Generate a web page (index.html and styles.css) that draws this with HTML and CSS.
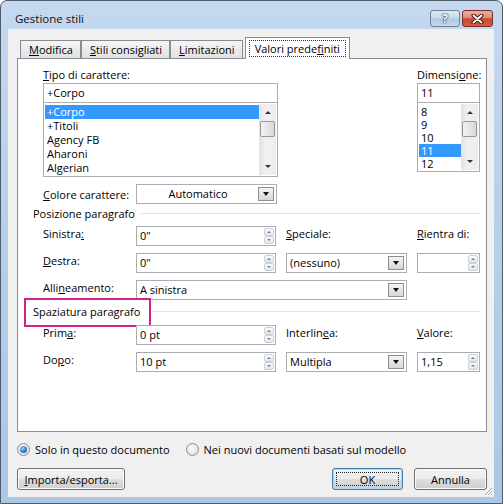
FILE: index.html
```html
<!DOCTYPE html>
<html lang="it">

<head>
    <meta charset="UTF-8">
    <meta name="viewport" content="width=device-width, initial-scale=1.0">
    <title>Gestione stili</title>
    <link rel="stylesheet" href="styles.css">
</head>

<body>
    <div class="window">
        <div class="titlebar">
            <span class="title">Gestione stili</span>
            <div class="caption">
                <div class="cap-btn help">?</div>
                <div class="cap-btn close">
                    <svg width="13" height="10" viewBox="0 0 13 10">
                        <path d="M2.5 1.5 L10.5 8.5 M10.5 1.5 L2.5 8.5" stroke="#4b1209" stroke-width="4" stroke-linecap="round" />
                        <path d="M2.5 1.5 L10.5 8.5 M10.5 1.5 L2.5 8.5" stroke="#fff" stroke-width="2" stroke-linecap="round" />
                    </svg>
                </div>
            </div>
        </div>

        <div class="client">
            <div class="tabs">
                <div class="tab"><u>M</u>odifica</div>
                <div class="tab"><u>S</u>tili consigliati</div>
                <div class="tab"><u>L</u>imitazioni</div>
                <div class="tab active"><span class="focus">Valori prede<u>f</u>initi</span></div>
            </div>

            <div class="panel">
                <div class="font-row">
                    <div class="font-col">
                        <div class="lbl"><u>T</u>ipo di carattere:</div>
                        <div class="textbox">+Corpo</div>
                        <div class="listbox">
                            <ul class="items">
                                <li class="sel">+Corpo</li>
                                <li>+Titoli</li>
                                <li>Agency FB</li>
                                <li>Aharoni</li>
                                <li>Algerian</li>
                            </ul>
                            <div class="vscroll">
                                <div class="arrow up"></div>
                                <div class="thumb"></div>
                                <div class="arrow down"></div>
                            </div>
                        </div>
                    </div>
                    <div class="size-col">
                        <div class="lbl">Dimensi<u>o</u>ne:</div>
                        <div class="textbox">11</div>
                        <div class="listbox small">
                            <ul class="items">
                                <li>8</li>
                                <li>9</li>
                                <li>10</li>
                                <li class="sel">11</li>
                                <li>12</li>
                            </ul>
                            <div class="vscroll">
                                <div class="arrow up"></div>
                                <div class="thumb"></div>
                                <div class="arrow down"></div>
                            </div>
                        </div>
                    </div>
                </div>

                <div class="form color-row">
                    <div class="lbl mid"><u>C</u>olore carattere:</div>
                    <div class="combo center">Automatico<span class="drop"></span></div>
                </div>

                <div class="group">Posizione paragrafo</div>
                <div class="form">
                    <div class="lbl">Sinistra<u>:</u></div>
                    <div class="textbox">0"<span class="spin"><i class="up"></i><i class="down"></i></span></div>
                    <div class="lbl"><u>S</u>peciale:</div>
                    <div class="lbl"><u>R</u>ientra di:</div>

                    <div class="lbl"><u>D</u>estra:</div>
                    <div class="textbox">0"<span class="spin"><i class="up"></i><i class="down"></i></span></div>
                    <div class="combo">(nessuno)<span class="drop"></span></div>
                    <div class="textbox"><span class="spin"><i class="up"></i><i class="down"></i></span></div>

                    <div class="lbl">Alli<u>n</u>eamento:</div>
                    <div class="combo wide">A sinistra<span class="drop"></span></div>
                </div>

                <div class="group marked">Spaziatura paragrafo</div>
                <div class="form spacing">
                    <div class="lbl">Prim<u>a</u>:</div>
                    <div class="textbox">0 pt<span class="spin"><i class="up"></i><i class="down"></i></span></div>
                    <div class="lbl">Interlin<u>e</u>a:</div>
                    <div class="lbl"><u>V</u>alore:</div>

                    <div class="lbl">Do<u>p</u>o:</div>
                    <div class="textbox">10 pt<span class="spin"><i class="up"></i><i class="down"></i></span></div>
                    <div class="combo">Multipla<span class="drop"></span></div>
                    <div class="textbox">1,15<span class="spin"><i class="up"></i><i class="down"></i></span></div>
                </div>
            </div>

            <div class="scope">
                <span class="radio on"></span><span class="radio-text">Solo in questo documento</span>
                <span class="radio"></span><span class="radio-text">Nei nuovi documenti basati sul modello</span>
            </div>

            <div class="actions">
                <button class="btn import"><u>I</u>mporta/esporta...</button>
                <div class="spacer"></div>
                <button class="btn ok">OK</button>
                <button class="btn cancel">Annulla</button>
            </div>

            <svg class="grip" width="10" height="10" viewBox="0 0 10 10">
                <path d="M9 2 L2 9 M9 5 L5 9 M9 8 L8 9" stroke="#a9a9a9" stroke-width="1" />
                <path d="M10 3 L3 10 M10 6 L6 10" stroke="#fff" stroke-width="1" />
            </svg>
        </div>
    </div>
</body>

</html>
```

FILE: styles.css
```css
* {
    box-sizing: border-box;
}

body {
    margin: 0;
    background: #fff;
    font-family: "Segoe UI", "Open Sans", sans-serif;
    font-size: 11px;
    color: #000;
}

u {
    text-decoration: underline;
    text-underline-offset: 1px;
}

/* window frame */
.window {
    width: 503px;
    height: 504px;
    display: flex;
    flex-direction: column;
    padding: 0 8px 6px 7px;
    border: 1px solid #4d5b6b;
    border-radius: 7px 7px 0 0;
    background: linear-gradient(#c4d9f0, #b8d0ea 40%, #aac7e6);
}

.titlebar {
    height: 28px;
    display: flex;
    justify-content: space-between;
    align-items: flex-start;
    padding: 9px 1px 0 7px;
    flex-shrink: 0;
}

.title {
    margin-top: 1px;
    line-height: 16px;
    font-size: 11.5px;
    color: #111;
}

.caption {
    display: flex;
    gap: 2px;
}

.cap-btn {
    height: 17px;
    border-radius: 3px;
    display: flex;
    align-items: center;
    justify-content: center;
}

.help {
    width: 30px;
    border: 1px solid #6e7f96;
    background: linear-gradient(#dfe9f5, #c8d9ee 48%, #b3c8e4 52%, #c3d6ee);
    color: #fff;
    font-weight: bold;
    font-size: 12px;
    text-shadow: 0 0 1px #2c3e5a, 0 0 1px #2c3e5a, 0 0 2px #2c3e5a;
}

.close {
    width: 31px;
    border: 1px solid #7b2a1e;
    background: linear-gradient(#eab0a2, #dc8c78 45%, #c9472f 52%, #d2603f);
}

/* client area */
.client {
    position: relative;
    flex: 1;
    background: #f0f0f0;
    padding: 8px 7px 0 9px;
}

.tabs {
    display: flex;
    align-items: flex-end;
    height: 21px;
    margin-left: 3px;
}

.tab {
    height: 18px;
    padding: 1px 7px 0 8px;
    line-height: 16px;
    border: 1px solid #898c95;
    border-bottom: none;
    background: linear-gradient(#f6f6f6, #eaeaea 50%, #e2e2e2);
    white-space: nowrap;
}

.tab.active {
    position: relative;
    z-index: 1;
    height: 22px;
    margin-left: 2px;
    margin-bottom: -1px;
    padding: 2px 3px 0;
    background: #fff;
}

.focus {
    display: inline-block;
    padding: 0 5px;
    border: 1px dotted #333;
    line-height: 15px;
}

.panel {
    height: 374px;
    background: #fff;
    border: 1px solid #898c95;
    padding: 8px 6px 0 25px;
}

.lbl {
    line-height: 15px;
    white-space: nowrap;
}

.lbl.mid {
    align-self: center;
}

.font-row {
    display: flex;
    justify-content: space-between;
}

.font-col {
    width: 235px;
}

.size-col {
    width: 63px;
}

.font-row .lbl {
    margin-bottom: 1px;
}

/* text boxes and combos */
.textbox,
.combo {
    position: relative;
    height: 20px;
    border: 1px solid #abadb3;
    background: #fff;
    line-height: 18px;
    padding-left: 3px;
    white-space: nowrap;
}

.combo.center {
    text-align: center;
    padding-right: 20px;
    width: 141px;
}

.combo.wide {
    grid-column: 2 / span 2;
}

.drop {
    position: absolute;
    right: 2px;
    top: 2px;
    width: 16px;
    height: 14px;
    border: 1px solid #8e8f8f;
    background: linear-gradient(#f4f4f4, #d6d6d6);
}

.drop::after {
    content: "";
    position: absolute;
    left: 4px;
    top: 4px;
    border-left: 3px solid transparent;
    border-right: 3px solid transparent;
    border-top: 4px solid #111;
}

.spin {
    position: absolute;
    right: 1px;
    top: 1px;
    width: 10px;
    height: 16px;
    display: flex;
    flex-direction: column;
}

.spin i {
    position: relative;
    flex: 1;
    border: 1px solid #ccd1d8;
    border-radius: 2px;
    background: linear-gradient(#f7f9fb, #e3e7ec);
}

.spin i::after {
    content: "";
    position: absolute;
    left: 2px;
    top: 2px;
    border-left: 2px solid transparent;
    border-right: 2px solid transparent;
}

.spin .up::after {
    border-bottom: 2px solid #6f819b;
}

.spin .down::after {
    border-top: 2px solid #6f819b;
}

/* list boxes */
.listbox {
    display: flex;
    height: 74px;
    border: 1px solid #abadb3;
    border-top: none;
    padding: 2px 1px 1px;
}

.listbox.small {
    height: 69px;
}

.items {
    flex: 1;
    list-style: none;
    margin: 0;
    padding: 0;
    overflow: hidden;
}

.items li {
    height: 14px;
    line-height: 14px;
    padding-left: 2px;
    white-space: nowrap;
}

.small .items li {
    height: 13px;
    line-height: 13px;
}

.items li.sel {
    background: #3399ff;
    color: #fff;
}

.vscroll {
    width: 17px;
    margin-top: -1px;
    display: flex;
    flex-direction: column;
    background: linear-gradient(90deg, #e3e3e3, #f1f1f1 40%, #ececec);
}

.arrow {
    position: relative;
    height: 17px;
}

.arrow::after {
    content: "";
    position: absolute;
    left: 6px;
    top: 7px;
    border-left: 3px solid transparent;
    border-right: 3px solid transparent;
}

.arrow.up::after {
    border-bottom: 3px solid #333;
}

.arrow.down {
    margin-top: auto;
}

.arrow.down::after {
    border-top: 3px solid #333;
}

.thumb {
    height: 16px;
    margin: 0 1px;
    border: 1px solid #979797;
    border-radius: 2px;
    background: linear-gradient(90deg, #f3f3f3, #e6e6e6 50%, #d8d8d8);
}

/* form grids */
.form {
    display: grid;
    grid-template-columns: 83px 140px 121px 63px;
    grid-auto-rows: 20px;
    column-gap: 10px;
    row-gap: 7px;
    margin-top: 5px;
}

.color-row {
    margin-top: 7px;
}

.form.spacing {
    margin-top: 6px;
}

.group {
    position: relative;
    display: flex;
    align-items: center;
    height: 15px;
    line-height: 15px;
    margin-top: 2px;
    margin-left: -10px;
    white-space: nowrap;
}

.group::after {
    content: "";
    flex: 1;
    height: 1px;
    margin-left: 6px;
    background: #dde3e8;
}

.group.marked {
    margin-top: 4px;
}

.group.marked::after {
    margin-left: 12px;
}

.group.marked::before {
    content: "";
    position: absolute;
    left: -9px;
    top: -6px;
    width: 123px;
    height: 25px;
    border: 2px solid #d4208c;
}

/* scope radios */
.scope {
    display: flex;
    align-items: center;
    height: 15px;
    margin-top: 10px;
}

.radio {
    position: relative;
    width: 13px;
    height: 13px;
    border-radius: 50%;
    border: 1px solid #8e8f8f;
    background: radial-gradient(circle at 45% 40%, #fff, #e2e2e2 70%, #cfcfcf);
}

.radio.on::after {
    content: "";
    position: absolute;
    left: 2px;
    top: 2px;
    width: 7px;
    height: 7px;
    border-radius: 50%;
    background: radial-gradient(circle at 40% 35%, #9ad0f8, #2a6fb8 60%, #16457f);
}

.radio-text {
    margin-left: 5px;
    margin-right: 16px;
    line-height: 15px;
}

/* bottom buttons */
.actions {
    display: flex;
    margin-top: 11px;
}

.spacer {
    flex: 1;
}

.btn {
    position: relative;
    height: 22px;
    padding: 0 6px;
    border: 1px solid #707070;
    border-radius: 3px;
    background: linear-gradient(#f3f3f3, #ebebeb 48%, #dddddd 52%, #cfcfcf);
    box-shadow: inset 0 0 0 1px #fbfbfb;
    font: inherit;
    color: #000;
}

.btn.import {
    width: 108px;
}

.btn.ok {
    width: 71px;
    border-color: #3c7fb1;
    box-shadow: inset 0 0 0 1px #a6d8f5;
}

.btn.ok::after {
    content: "";
    position: absolute;
    left: 3px;
    right: 3px;
    top: 3px;
    bottom: 3px;
    border: 1px dotted #222;
}

.btn.cancel {
    width: 73px;
    margin-left: 11px;
}

.grip {
    position: absolute;
    right: 1px;
    bottom: 1px;
}
```
